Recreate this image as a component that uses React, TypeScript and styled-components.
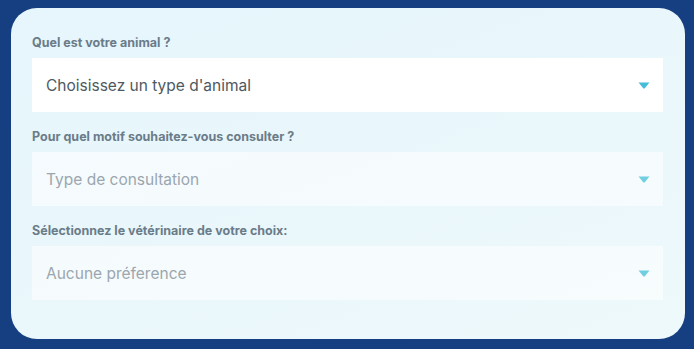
import styled, { createGlobalStyle } from 'styled-components';

const Global = createGlobalStyle`
  html, body { margin: 0; padding: 0; background: #163f82; }
  body { font-family: Inter, 'Noto Sans', sans-serif; }
`;

const Page = styled.div`
  width: 694px; height: 349px; box-sizing: border-box;
  padding: 8px 9px 10px 11px; background: #163f82;
`;

const Card = styled.form`
  height: 100%; box-sizing: border-box;
  background: linear-gradient(160deg, #e6f6fc 0%, #eaf7fb 60%, #eef9fb 100%);
  border-radius: 26px;
  padding: 26px 22px 0 21px;
  display: flex; flex-direction: column;
`;

const Field = styled.div`
  display: flex; flex-direction: column; gap: 6px; margin-bottom: 16px;
`;

const Label = styled.label`
  font-size: 12.5px; font-weight: 700; color: #6b7c89; line-height: 18px;
`;

const SelectBox = styled.div<{ $muted?: boolean }>`
  height: 54px; box-sizing: border-box;
  display: flex; align-items: center; justify-content: space-between;
  padding: 0 13px 0 14px;
  background: ${({ $muted }) => ($muted ? 'rgba(255,255,255,0.55)' : '#ffffff')};
  color: ${({ $muted }) => ($muted ? '#9ba6ae' : '#4e5962')};
  font-size: 15.5px;
`;

const Caret = styled.svg<{ $muted?: boolean }>`
  width: 12px; height: 7px; flex: none;
  fill: ${({ $muted }) => ($muted ? '#6fcfe0' : '#45bdd8')};
`;

const fields = [
  { label: 'Quel est votre animal ?', value: "Choisissez un type d'animal", muted: false },
  { label: 'Pour quel motif souhaitez-vous consulter ?', value: 'Type de consultation', muted: true },
  { label: 'Sélectionnez le vétérinaire de votre choix:', value: 'Aucune préference', muted: true },
];

export default function App() {
  return (
    <>
      <Global />
      <Page>
        <Card>
          {fields.map((f) => (
            <Field key={f.label}>
              <Label>{f.label}</Label>
              <SelectBox $muted={f.muted}>
                <span>{f.value}</span>
                <Caret $muted={f.muted} viewBox="0 0 12 7">
                  <path d="M0.5 0.5 H11.5 L6.8 6.2 Q6 7 5.2 6.2 Z" />
                </Caret>
              </SelectBox>
            </Field>
          ))}
        </Card>
      </Page>
    </>
  );
}
